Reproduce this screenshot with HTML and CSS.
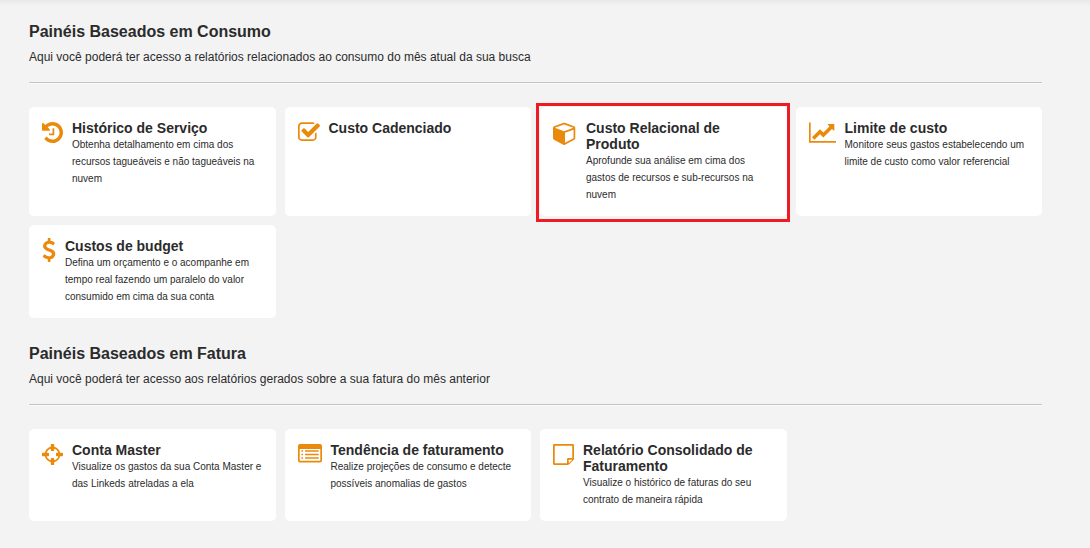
FILE: index.html
```html
<!DOCTYPE html>
<html lang="pt-BR">
<head>
<meta charset="utf-8">
<title>Painéis</title>
<link rel="stylesheet" href="styles.css">
</head>
<body>
<main class="page">
  <section class="section">
    <h2 class="section-title">Painéis Baseados em Consumo</h2>
    <p class="section-text">Aqui você poderá ter acesso a relatórios relacionados ao consumo do mês atual da sua busca</p>
    <hr class="divider">
    <div class="cards">
      <a class="card" href="#historico">
        <svg class="icon icon-m" viewBox="128 128 1536 1536" aria-hidden="true"><path d="M1664 896q0 156-61 298t-164 245-245 164-298 61q-172 0-327-72.500t-264-204.500q-7-10-6.500-22.500t8.500-20.500l137-138q10-9 25-9 16 2 23 12 73 95 179 147t225 52q104 0 198.500-40.500t163.500-109.500 109.500-163.500 40.500-198.500-40.500-198.500-109.500-163.500-163.500-109.500-198.500-40.500q-98 0-188 35.500t-160 101.500l137 138q31 30 14 69-17 40-59 40h-448q-26 0-45-19t-19-45v-448q0-42 40-59 39-17 69 14l130 129q107-101 244.500-156.500t284.500-55.500q156 0 298 61t245 164 164 245 61 298zm-640-288v448q0 14-9 23t-23 9h-320q-14 0-23-9t-9-23v-64q0-14 9-23t23-9h224v-352q0-14 9-23t23-9h64q14 0 23 9t9 23z"/></svg>
        <div class="card-body">
          <h3 class="card-title">Histórico de Serviço</h3>
          <p class="card-text">Obtenha detalhamento em cima dos recursos tagueáveis e não tagueáveis na nuvem</p>
        </div>
      </a>
      <a class="card" href="#cadenciado">
        <svg class="icon icon-l" viewBox="64 128 1664 1536" aria-hidden="true"><path d="M1472 930v318q0 119-84.500 203.500t-203.500 84.500h-832q-119 0-203.500-84.500t-84.500-203.500v-832q0-119 84.500-203.500t203.500-84.500h832q63 0 117 25 15 7 18 23 3 17-9 29l-49 49q-10 10-23 10-3 0-9-2-23-6-45-6h-832q-66 0-113 47t-47 113v832q0 66 47 113t113 47h832q66 0 113-47t47-113v-254q0-13 9-22l64-64q10-10 23-10 6 0 12 3 20 8 20 29zm231-489l-814 814q-24 24-57 24t-57-24l-430-430q-24-24-24-57t24-57l110-110q24-24 57-24t57 24l263 263 647-647q24-24 57-24t57 24l110 110q24 24 24 57t-24 57z"/></svg>
        <div class="card-body">
          <h3 class="card-title">Custo Cadenciado</h3>
        </div>
      </a>
      <a class="card card-highlight" href="#relacional">
        <svg class="icon icon-cube" viewBox="0 0 1792 1792" aria-hidden="true"><path d="M896 1629l640-349v-636l-640 233v752zm-64-865l698-254-698-254-698 254zm832-252v768q0 35-18 65t-49 47l-704 384q-28 16-61 16t-61-16l-704-384q-31-17-49-47t-18-65v-768q0-40 23-73t61-47l704-256q22-8 44-8t44 8l704 256q38 14 61 47t23 73z"/></svg>
        <div class="card-body">
          <h3 class="card-title">Custo Relacional de Produto</h3>
          <p class="card-text">Aprofunde sua análise em cima dos gastos de recursos e sub-recursos na nuvem</p>
        </div>
      </a>
      <a class="card" href="#limite">
        <svg class="icon icon-xxl" viewBox="0 128 2048 1536" aria-hidden="true"><path d="M2048 1536v128h-2048v-1536h128v1408h1920zm-128-1248v435q0 21-19.500 29.500t-35.500-7.500l-121-121-633 633q-10 10-23 10t-23-10l-233-233-416 416-192-192 585-585q10-10 23-10t23 10l233 233 464-464-121-121q-16-16-7.500-35.500t29.500-19.500h435q14 0 23 9t9 23z"/></svg>
        <div class="card-body">
          <h3 class="card-title">Limite de custo</h3>
          <p class="card-text">Monitore seus gastos estabelecendo um limite de custo como valor referencial</p>
        </div>
      </a>
      <a class="card" href="#budget">
        <svg class="icon icon-s" viewBox="384 0 1024 1792" aria-hidden="true"><path d="M1362 1185q0 153-99.500 263.500t-258.500 136.500v175q0 14-9 23t-23 9h-135q-13 0-22.500-9.500t-9.500-22.500v-175q-66-9-127.500-31t-101.500-44.500-74-48-46.500-37.500-17.500-18q-17-21-2-41l103-135q7-10 23-12 15-2 24 9l2 2q113 99 243 125 37 8 74 8 81 0 142.500-43t61.500-122q0-28-15-53t-33.500-42-58.500-37.500-66-32-80-32.500q-39-16-61.500-25t-61.500-26.500-62.500-31-56.500-35.500-53.500-42.500-43.500-49-35.500-58-21-66.500-8.500-78q0-138 98-242t255-134v-180q0-13 9.500-22.500t22.500-9.500h135q14 0 23 9t9 23v176q57 6 110.500 23t87 33.500 63.500 37.500 39 29 15 14q17 18 5 38l-81 146q-8 15-23 16-14 3-27-7-3-3-14.500-12t-39-26.500-58.500-32-74.500-26-85.500-11.500q-95 0-155 43t-60 111q0 26 8.500 48t29.500 41.500 39.500 33 56 31 60.500 27 70 27.500q53 20 81 31.500t76 35 75.500 42.500 62 50 53 63.500 31.500 76.500 13 94z"/></svg>
        <div class="card-body">
          <h3 class="card-title">Custos de budget</h3>
          <p class="card-text">Defina um orçamento e o acompanhe em tempo real fazendo um paralelo do valor consumido em cima da sua conta</p>
        </div>
      </a>
    </div>
  </section>

  <section class="section">
    <h2 class="section-title">Painéis Baseados em Fatura</h2>
    <p class="section-text">Aqui você poderá ter acesso aos relatórios gerados sobre a sua fatura do mês anterior</p>
    <hr class="divider">
    <div class="cards">
      <a class="card" href="#master">
        <svg class="icon icon-m" viewBox="128 128 1536 1536" aria-hidden="true"><path d="M1325 1024h-109q-26 0-45-19t-19-45v-128q0-26 19-45t45-19h109q-32-108-112.500-188.500t-188.500-112.500v109q0 26-19 45t-45 19h-128q-26 0-45-19t-19-45v-109q-108 32-188.500 112.500t-112.500 188.500h109q26 0 45 19t19 45v128q0 26-19 45t-45 19h-109q32 108 112.500 188.500t188.500 112.500v-109q0-26 19-45t45-19h128q26 0 45 19t19 45v109q108-32 188.500-112.500t112.500-188.500zm339-192v128q0 26-19 45t-45 19h-143q-37 161-154.500 278.500t-278.500 154.500v143q0 26-19 45t-45 19h-128q-26 0-45-19t-19-45v-143q-161-37-278.500-154.500t-154.500-278.500h-143q-26 0-45-19t-19-45v-128q0-26 19-45t45-19h143q37-161 154.500-278.500t278.500-154.500v-143q0-26 19-45t45-19h128q26 0 45 19t19 45v143q161 37 278.500 154.500t154.500 278.500h143q26 0 45 19t19 45z"/></svg>
        <div class="card-body">
          <h3 class="card-title">Conta Master</h3>
          <p class="card-text">Visualize os gastos da sua Conta Master e das Linkeds atreladas a ela</p>
        </div>
      </a>
      <a class="card" href="#tendencia">
        <svg class="icon icon-xl" viewBox="0 0 24 21" aria-hidden="true"><path fill-rule="evenodd" d="M2 0h20a2 2 0 0 1 2 2v14.500a2 2 0 0 1-2 2H2a2 2 0 0 1-2-2V2a2 2 0 0 1 2-2zM1.700 5v11.300a.5.500 0 0 0 .5.500h19.600a.5.500 0 0 0 .5-.5V5zM3.400 6.200h1.700v1.600H3.400zM7 6.200h13.700v1.600H7zM3.400 9.700h1.700v1.600H3.400zM7 9.700h13.700v1.600H7zM3.400 13.200h1.700v1.600H3.400zM7 13.200h13.700v1.600H7z"/></svg>
        <div class="card-body">
          <h3 class="card-title">Tendência de faturamento</h3>
          <p class="card-text">Realize projeções de consumo e detecte possíveis anomalias de gastos</p>
        </div>
      </a>
      <a class="card" href="#consolidado">
        <svg class="icon icon-m" viewBox="0 0 1536 1536" aria-hidden="true"><path fill-rule="evenodd" d="M96 0H1440Q1536 0 1536 96V1056Q1536 1130 1484 1184L1184 1484Q1130 1536 1056 1536H96Q0 1536 0 1440V96Q0 0 96 0ZM128 128V1408H1024V1120Q1024 1024 1120 1024H1408V128ZM1152 1152V1396Q1172 1389 1181 1380L1380 1181Q1389 1172 1396 1152Z"/></svg>
        <div class="card-body">
          <h3 class="card-title">Relatório Consolidado de Faturamento</h3>
          <p class="card-text">Visualize o histórico de faturas do seu contrato de maneira rápida</p>
        </div>
      </a>
    </div>
  </section>
</main>
</body>
</html>
```
FILE: styles.css
```css
* {
  box-sizing: border-box;
}

body {
  margin: 0;
  min-height: 100vh;
  background: #f3f3f3 linear-gradient(#e8e8e8, #f3f3f3) 0 0 / 100% 6px no-repeat;
  color: #2b2b2b;
  font-family: "Liberation Sans", Arial, sans-serif;
}

.page {
  padding: 23px 48px 26px 29px;
}

.section + .section {
  margin-top: 27px;
}

.section-title {
  margin: 0;
  font-size: 16px;
  line-height: 18px;
}

.section-text {
  margin: 7px 0 0;
  font-size: 12px;
  line-height: 18px;
}

.divider {
  height: 2px;
  margin: 16px 0 23px;
  border: 0;
  border-top: 1px solid #c4c4c4;
  background: #fafafa;
}

.cards {
  display: grid;
  grid-template-columns: repeat(4, 1fr);
  gap: 9px;
}

.card {
  position: relative;
  display: flex;
  align-items: flex-start;
  gap: 9px;
  padding: 13px;
  border-radius: 5px;
  background: #fff;
  color: inherit;
  text-decoration: none;
}

.card-highlight::after {
  content: "";
  position: absolute;
  inset: -4px -3px -6px -4px;
  border: 3px solid #ed1c24;
}

.card-body {
  flex: 1;
  min-width: 0;
}

.card-title {
  margin: 0;
  font-size: 14px;
  line-height: 16px;
}

.card-text {
  margin: 0;
  font-size: 10px;
  line-height: 17px;
}

.icon {
  flex: none;
  height: 21px;
  margin-top: 2px;
  fill: #ea8a0b;
}

.icon-s {
  width: 14px;
  height: 24px;
  margin-top: 0;
}

.icon-m {
  width: 21px;
}

.icon-l {
  width: 22px;
}

.icon-xl {
  width: 24px;
}

.icon-cube {
  width: 24px;
  height: 24px;
  margin-top: 1px;
}

.icon-xxl {
  width: 27px;
}
```
